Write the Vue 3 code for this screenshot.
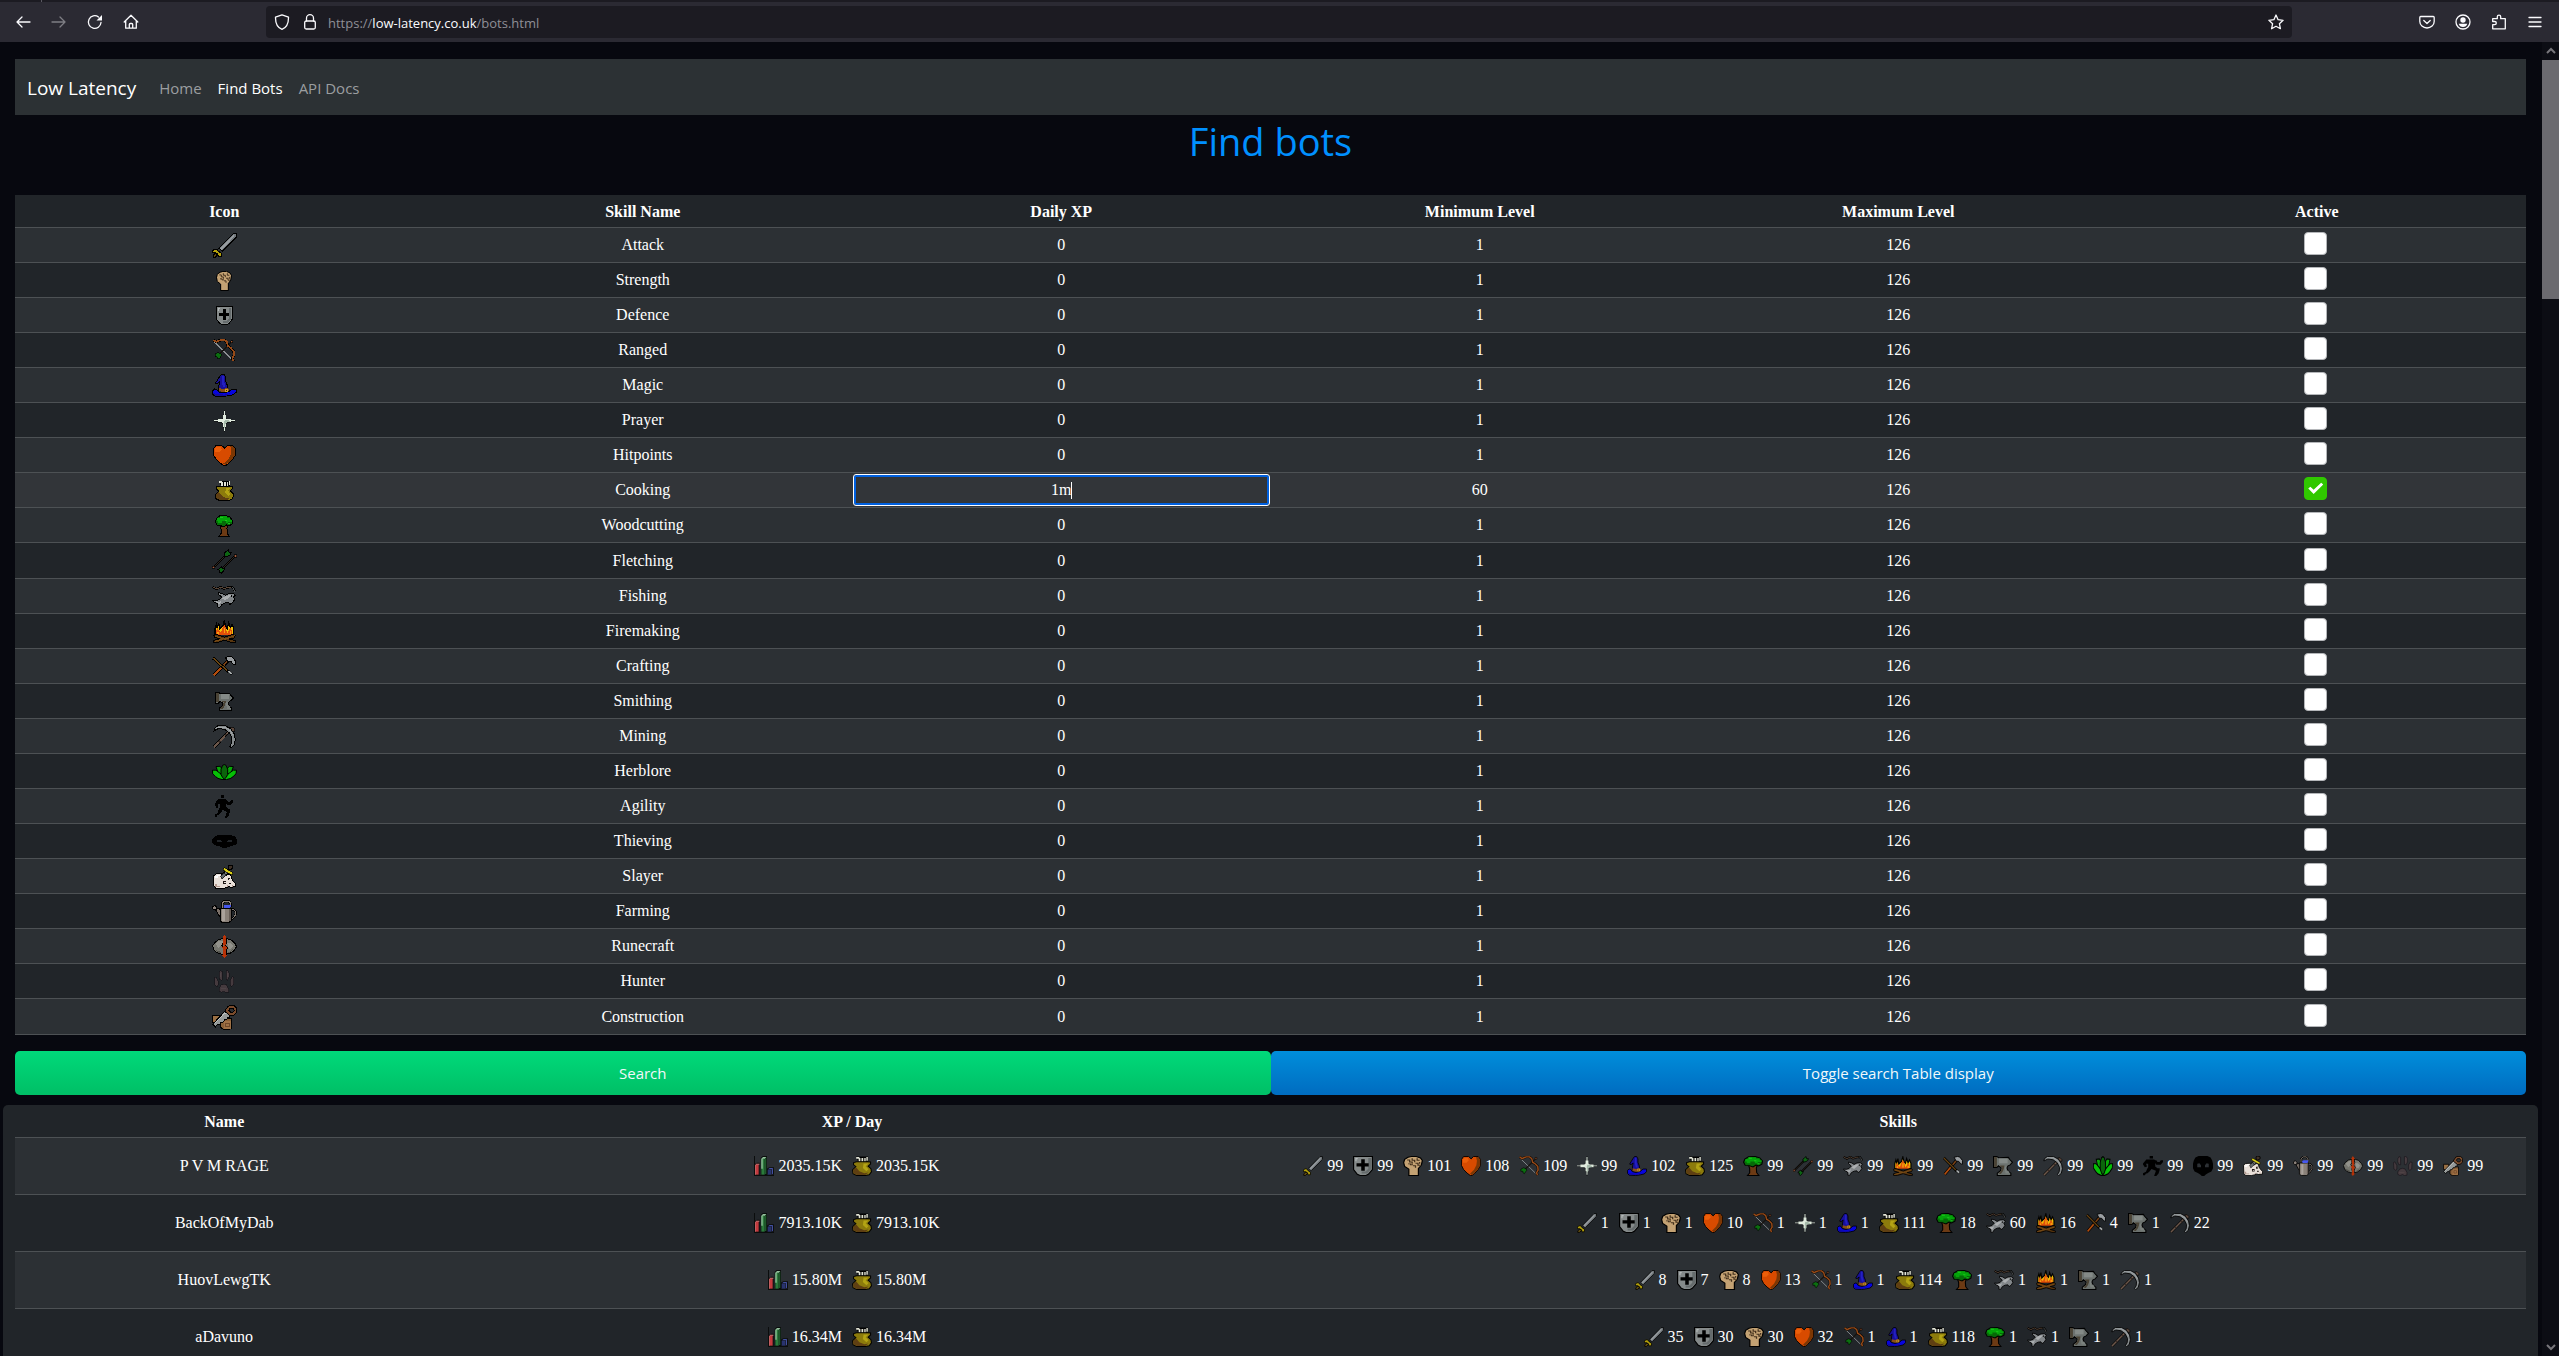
<script setup>
import { h, ref } from 'vue'

// Each icon: view box, then [path, fill, stroke, stroke width]; three units make one pixel.
const K = '#000'
const icons = {
  attack: { box: [96, 24, 75, 75], shapes: [
    ['M117,70 156,30 160,26 169,26 169,36 164,42 127,79z', '#72787c', K, 3],
    ['M120,72 160,31 163,34 124,76z', '#969b9f'],
    ['M98,78 102,72 110,72 114,78 124,85 124,94 115,95 113,87 106,83 98,83z', '#b3a00c', K, 3],
    ['M99,91 107,84 113,90 105,97 99,97z', '#5e4a10', K, 3]
  ] },
  strength: { box: [108, 138, 48, 61], shapes: [
    ['M122,178 112,170 109.500,158 112,148 120,142 128,139.500 140,139.500 150,144 154.500,152 152,166 145,176 145,197.500 122,197.500z', '#c4a273', K, 3],
    ['M118,150h6v6h6v6 M130,145v6h6v6 M142,145v6h6 M120,162h6v3h6 M138,160h6v6h6 M132,168h6v6 M148,156v6', 'none', '#43301c', 3]
  ] },
  defence: { box: [108, 246, 51, 57], shapes: [
    ['M109.500,247.500H157.500V285L147,298 141,301.500H126L119,298 109.500,285z', '#858a8a', K, 3],
    ['M147,252h7v32l-10,12h-14v-6h10l7,-8z', '#656b6c'],
    ['M117,267h31v9H117z M129,255h9v33h-9z', '#000'],
    ['M114,252h6v3h-6z M114,252h3v9h-3z', '#b4b9b9']
  ] },
  ranged: { box: [102, 345, 66, 68], shapes: [
    ['M106,353 160,407', 'none', '#8b8f92', 3],
    ['M158,354 122,390', 'none', '#17130f', 4],
    ['M104,348 112,354 120,350 126,348 137,348 144,354 147,366 156,372 164,381 165,393 160,402 163,410', 'none', K, 8],
    ['M104,348 112,354 120,350 126,348 137,348 144,354 147,366 156,372 164,381 165,393 160,402 163,410', 'none', '#964a18', 5],
    ['M155,350h6v6h-6z', '#a55a32', K, 2],
    ['M108,390 117,385 125,388 128,394 124,398 120,405 115,402 115,397 108,397z', '#0c6e10', K, 2]
  ] },
  magic: { box: [96, 450, 75, 69], shapes: [
    ['M119,458 124,452 132,451.500 137,460 137,472 142,484 144,496 116,498 117,484 119,474 111,480 106,478 111,470z', '#18109a', K, 3],
    ['M126,456h6v16l5,18h-8l-4,-18z', '#2420c4'],
    ['M97.500,500 104,495 110,496 116,504 130,507 146,503 156,495 169.500,495 169.500,504 160,512 146,515 128,517.500 104,516 98,510z', '#0704df', K, 3],
    ['M100,508 116,510 134,512 150,508 140,515H106z', '#120b9c'],
    ['M117,492 130,495 142,491 148,496 146,502 130,504 117,501z', '#8a4d18'],
    ['M135,494h9v9h-9z', '#c99a2a'],
    ['M138,497h3v3h-3z', '#3a2410']
  ] },
  prayer: { box: [102, 555, 63, 66], shapes: [
    ['M132,555h3v12h3v12h3v3h12v3h12v6h-12v3h-12v3h-3v12h-3v12h-3v-12h-3v-12h-3v-3h-12v-3h-12v-6h12v-3h12v-3h3v-12h3z', '#131518'],
    ['M132,558h3v12h3v10l4,3h12v3h11v3h-11v3h-12l-4,3v10h-3v12h-3v-12h-3v-10l-4,-3h-12v-3h-11v-3h11v-3h12l4,-3v-10h3z', '#dfeadd'],
    ['M135,584h6l8,4v3l-9,2 -4,4v12h-3v-20z', '#a4b8a9']
  ] },
  hitpoints: { box: [99, 661, 69, 62], shapes: [
    ['M134,670 142,662.500H158L166.500,672V690L158,703 146,715 137,721.500H131L120,714 108,703 100.500,690V672L108,662.500H125z', '#d84b00', K, 3],
    ['M151,664H158L165,673V690L157,702 145,714 136,720 130,716 144,704 152,690 154,676z', '#7c3704'],
    ['M106,670 112,667H122L126,674 118,682H106z', '#ec5f0a']
  ] },
  cooking: { box: [105, 768, 57, 63], shapes: [
    ['M117,769.500h34v18h-28z', '#000'],
    ['M117,771h9v3h3v12h-5v-9h-7z M132,774h5v12h-5z M140,774h4v12h-4z M146,771h4v12h-4z', '#e2e4d6'],
    ['M109.500,789 118,786H150L158,787V793L151,800 159,808 160.500,818 154,827 144,829.500H118L108,824 106.500,812 116,801 109.500,796z', '#8c7b0c', K, 3],
    ['M108,812 117,804 126,816 140,822 152,820 143,828H119L109,822z', '#5f3f12'],
    ['M138,792h14l-8,8 8,10 -6,6 -10,-10z', '#b3a414']
  ] },
  woodcutting: { box: [105, 870, 54, 66], shapes: [
    ['M120,899 144,899 141,910 142,925 148,934.500H117L123,926V912z', '#6c3a14', K, 3],
    ['M106.500,890 110,880 120,872 138,871.500 150,876 157.500,886 156,897 147,903 140,900 132,906 122,902 111,901z', '#066a08', K, 3],
    ['M112,880h8v-6h20v4h10v6h5v6h-10v4h-8v-6h-12v6h-10v-6h-5z', '#04a50a'],
    ['M120,876h9v3h-9z M135,884h6v3h-6z M144,894h6v3h-6z', '#1cc81c']
  ] },
  fletching: { box: [96, 972, 75, 75], shapes: [
    ['M101,1026 140,987 M166,993 127,1032', 'none', K, 7],
    ['M101,1026 140,987 M166,993 127,1032', 'none', '#4a3c30', 2],
    ['M97,1023h7v7h-7z M163,989h7v7h-7z', '#a65c3c', K, 2],
    ['M133,984 139,979 145,974 147,982 154,982 151,989 145,993 135,995z', '#0d6513', K, 3],
    ['M114,1034 124,1025 128,1030 135,1030 131,1038 124,1045 119,1042 120,1036z', '#0d6513', K, 3]
  ] },
  fishing: { box: [96, 1081, 72, 66], shapes: [
    ['M98,1084 110,1090 122,1084 132,1089 146,1085 156,1084 162,1090 165,1098', 'none', K, 7],
    ['M98,1084 110,1090 122,1084 132,1089 146,1085 152,1085', 'none', '#5b4637', 3],
    ['M155,1083 161,1090 165,1098', 'none', '#7d8284', 2],
    ['M97.500,1124 108,1125 118,1122 126,1114 116,1107 116,1101 128,1104 136,1109 146,1104 158,1103 166,1108 160,1114 164,1122 158,1131 150,1136 146,1130 136,1131 126,1136 120,1145 113,1144 114,1134 104,1131z', '#83878a', K, 3],
    ['M126,1118 138,1111 154,1107 148,1114 136,1124z M106,1127 118,1128 126,1124 118,1137z', '#adb0b2'],
    ['M153,1109h4v4h-4z', K]
  ] },
  firemaking: { box: [99, 1, 69, 68], shapes: [
    ['M105,44V28L109,14 112,25 116,10 119,28 123,24 128,20 133,4 137,20 142,26 146,10 151,24 156,14 161,26V44z', '#f0c008', K, 4],
    ['M109,44V32L113,25 118,34 123,38 128,24 133,15 138,26 141,40 146,34 151,24 156,34V44z', '#e2500a'],
    ['M112,36h5v7h-5z M131,26h5v14h-5z M149,34h5v8h-5z', '#f7a010'],
    ['M101,46 110,44 134,52 158,44 166,47 163,54 148,57 166,62V67H154L134,61 114,67H101V61L120,56 103,53z', '#59360f', K, 3],
    ['M104,48 134,58 164,48 M104,64 134,56', 'none', '#7a4d16', 3]
  ] },
  crafting: { box: [96, 108, 72, 63], shapes: [
    ['M102,166 148,118', 'none', K, 10],
    ['M102,166 124,143', 'none', '#b04c0e', 6],
    ['M123,144 148,118', 'none', '#7a4216', 5],
    ['M136,112 148,109.500 156,111 166,122 166,134 160,133 153,125 143,124z', '#9a9ea1', K, 3],
    ['M99,114 146,156', 'none', K, 9],
    ['M99,114 142,152', 'none', '#6b4612', 4],
    ['M143,152h7l6,6v5h-5l-8,-6z', '#a9adaf', K, 2]
  ] },
  smithing: { box: [105, 216, 56, 57], shapes: [
    ['M106.500,217.500H116L121,221 148,220 152,226 159.500,234 152,242 147,244 144,250 148,260 155,265V271.500H117V265L126,258 128,250 120,244 116,249 106.500,249z', '#6c726f', K, 3],
    ['M108,219h8v28h-8z M120,266l7,-7 4,-12h-6v-4h12v4l-4,12 -6,8z', '#4a4335'],
    ['M122,223h24v14h-24z', '#848a87'],
    ['M137,246h5v12h6l4,8h-12z', '#7b817e']
  ] },
  mining: { box: [99, 315, 69, 68], shapes: [
    ['M102,380 158,324', 'none', K, 9],
    ['M102,380 158,324', 'none', '#6b564a', 5],
    ['M116,366 120,362 M136,346 140,342', 'none', '#3a2e28', 5],
    ['M150,321h8l6,6v6h-8z', '#5c483d', K, 2],
    ['M102,332 104,324 114,317 136,317 152,326 163,342 166,358 162,374 153,382 149,378 155,368 156,354 148,338 134,328 116,325z', '#858a8c', K, 3],
    ['M112,321H134L150,331 159,346', 'none', '#b0b4b6', 2]
  ] },
  herblore: { box: [96, 430, 75, 49], shapes: [
    ['M108,438 120,437 126,444V462L114,456z M160,438 148,437 142,444V462L154,456z', '#08a808', K, 3],
    ['M97.500,449 108,449 118,457 126,464 133,470 141,464 149,457 160,449 169.500,449 168,460 160,468 152,474 140,477.500H126L114,474 106,468 98,460z', '#06c006', K, 3],
    ['M133,431.500 138,434 143,446 143,462 138,472 133,476 128,472 123,462 123,446 128,434z', '#0b640b', K, 3]
  ] },
  agility: { box: [105, 525, 54, 69], shapes: [
    ['M123,525h9v9h-9z M114,537h21l3,3h3l3,6h6l3,-6h6v6l-6,9h-12l-3,-6v12l6,6h6v6l-3,12 -6,9h-6l5,-18 -12,-6 -6,9 -6,6h-3l-3,6h-6v-6l9,-6 3,-9 3,-6v-12h-6l3,9 -6,3 -6,-12z', K]
  ] },
  thieving: { box: [96, 645, 75, 39], shapes: [
    ['M105,648 117,645H150L162,648 168,654 171,660V669L165,675 153,678 144,681 138,684H129L123,681 114,678 102,675 96,669V660L99,654z M112,660V667H126V663L120,659z M141,663V667H155V660L147,659z', K]
  ] },
  slayer: { box: [99, 735, 69, 72], shapes: [
    ['M126,762 144,748 148,756 130,776z', '#73797b', K, 3],
    ['M144,738 150,735 158,738 158,745 150,750 144,746z', '#3f3025', K, 3],
    ['M129,745 133,743 158,758 158,764 152,764 129,750z', '#d8cd16', K, 2],
    ['M100.500,768 108,762 124,761 130,768 140,766 144,762 152,764 154,774 160,784 166.500,790V800L154,802 146,800 138,803 128,805.500H108L102,798z', '#e9e0d9', K, 3],
    ['M122,768 133,758 138,766 126,778z', '#686e70', K, 2],
    ['M130,782h9v9h-9z M144,774h7v7h-7z M148,788h5v5h-5z', '#1c1512'],
    ['M133,785h4v3h-4z M147,776h3v3h-3z', '#e9e0d9'],
    ['M104,792h6v6h10v3h-14z M140,796h4v4h-4z M156,794h3v6h-3z', '#b49a8f'],
    ['M106,768h6v-3h8v3h-6v6h-8z', '#fff']
  ] },
  farming: { box: [96, 840, 75, 69], shapes: [
    ['M118,866 124,874 124,888 118,888 106,868z', '#7b7068', K, 3],
    ['M97.500,860 105,856 111,862 110,869 103,870 98,866z', '#8b817a', K, 3],
    ['M126,864V850L134,843H146L152,850V860', 'none', K, 7],
    ['M126,864V850L134,843H146L152,850V860', 'none', '#8c8279', 3],
    ['M152,870 160,868 167,874 167,884 158,896 151,898', 'none', K, 7],
    ['M152,870 160,868 167,874 167,884 158,896 151,898', 'none', '#7f766e', 3],
    ['M120,864H154V903L146,907.500H127L120,903z', '#8a8179', K, 3],
    ['M127,868h8v36h-8z', '#aaa29b'],
    ['M148,868h5v34h-5z', '#665c55'],
    ['M130,857 136,855H154L151,864H132z', '#4657ee']
  ] },
  runecraft: { box: [96, 945, 75, 69], shapes: [
    ['M97.500,978 104,968 116,959 126,956.500H142L154,960 166,972 169.500,980 162,992 150,1000 138,1003H126L110,998 102,990z', '#77776f', K, 3],
    ['M106,972 118,962H128V974L116,984z M142,970h10l8,8 -6,8h-8z', '#92928b'],
    ['M104,988 122,996V1000L112,997z M144,998 158,988 150,998z', '#55554f'],
    ['M129,956v12l-4,8 8,6 -4,8 4,14 M138,956l2,12 -4,8 6,8 -4,10v8', 'none', K, 3],
    ['M133,945 141,955H137V966L139,974 135,978 141,984 137,992V1005H141L133,1014 126,1005H130V990L126,982 131,976 129,966V955H126z', '#b83308']
  ] },
  hunter: { box: [102, 1054, 63, 68], shapes: [
    ['M118,1062 121,1056 126,1058V1084L120,1083 117,1074z M138,1056 143,1055 147,1062V1076L143,1084 138,1083z M103.500,1076 108,1074 114,1086V1098L111,1103 105,1098z M162,1076 157,1074 151,1084V1098L154,1103 161,1098z M124,1098 132,1096 140,1098 146,1110V1119L138,1120.500 132,1117 124,1120.500 117,1116V1108z', '#453a3e', '#17141a', 2],
    ['M121,1062v12 M143,1062v12 M122,1110h16', 'none', '#55484c', 2]
  ] },
  construction: { box: [96, 1155, 75, 75], shapes: [
    ['M98,1186H118V1206H98z', '#9a6f43', K, 3],
    ['M122,1206 138,1196H154V1226L146,1228.500H130L122,1222z', '#8a6038', K, 3],
    ['M132,1204h20v22h-20z', '#9f7146'],
    ['M137,1210h10v9h-10z', 'none', '#71492a', 3],
    ['M98,1213 136,1172 150,1186 149,1193 143,1193 140,1199 134,1199 130,1206 123,1207 120,1212 112,1214 106,1221z', '#969a99', K, 3],
    ['M104,1210 138,1177', 'none', '#c1c5c3', 3],
    ['M134,1174 144,1159 152,1156.500H162L169.500,1164V1178L160,1186 150,1187z M150,1165 146,1171 152,1177H159L163,1172 159,1165z', '#7a4b2c', K, 3]
  ] },
  overall: { box: [42, 48, 60, 60], shapes: [
    ['M42,48h3v57h57v3H42z M45,72l6,-4h8v38H45z M62,54l6,-6h13v58H62z M80,86l8,-4h14v22H80z', '#0b0d0d'],
    ['M46,74h10v30H46z', '#c33a3e'],
    ['M48,71h10v3H48z M46,74h2v30h-2z', '#e07a7a'],
    ['M64,56h10v48H64z', '#2b7a3b'],
    ['M64,56 69,51H79L75,56z M64,56h4v30h-4z', '#93c29d'],
    ['M75,56 79,52V102H75z', '#1f5a2b'],
    ['M83,89h10v15H83z', '#29336e'],
    ['M84,88 89,84H100L95,88z M95,89l4,-4v16l-4,3z', '#4350a0']
  ] }
}

const SkillIcon = ({ name }) => {
  const { box, shapes } = icons[name]
  return h('svg', {
    viewBox: box.join(' '),
    width: Math.round(box[2] / 3),
    height: Math.round(box[3] / 3),
    preserveAspectRatio: 'none',
    'aria-hidden': 'true'
  }, shapes.map(([d, fill, stroke, width]) =>
    h('path', { d, fill, stroke: stroke || 'none', 'stroke-width': width || 0 })))
}
SkillIcon.props = ['name']

const labels = ['Attack', 'Strength', 'Defence', 'Ranged', 'Magic', 'Prayer', 'Hitpoints', 'Cooking',
  'Woodcutting', 'Fletching', 'Fishing', 'Firemaking', 'Crafting', 'Smithing', 'Mining', 'Herblore',
  'Agility', 'Thieving', 'Slayer', 'Farming', 'Runecraft', 'Hunter', 'Construction']

const skills = ref(labels.map((label) => ({
  label,
  key: label.toLowerCase(),
  xp: label === 'Cooking' ? '1m' : '0',
  min: label === 'Cooking' ? '60' : '1',
  max: '126',
  active: label === 'Cooking'
})))

const current = ref('cooking')
const showTable = ref(true)

const parse = (text) => text.split(' ').map((part) => part.split(':'))

const bots = [
  { name: 'P V M RAGE', xp: '2035.15K', levels: parse('attack:99 defence:99 strength:101 hitpoints:108 ranged:109 prayer:99 magic:102 cooking:125 woodcutting:99 fletching:99 fishing:99 firemaking:99 crafting:99 smithing:99 mining:99 herblore:99 agility:99 thieving:99 slayer:99 farming:99 runecraft:99 hunter:99 construction:99') },
  { name: 'BackOfMyDab', xp: '7913.10K', levels: parse('attack:1 defence:1 strength:1 hitpoints:10 ranged:1 prayer:1 magic:1 cooking:111 woodcutting:18 fishing:60 firemaking:16 crafting:4 smithing:1 mining:22') },
  { name: 'HuovLewgTK', xp: '15.80M', levels: parse('attack:8 defence:7 strength:8 hitpoints:13 ranged:1 magic:1 cooking:114 woodcutting:1 fishing:1 firemaking:1 smithing:1 mining:1') },
  { name: 'aDavuno', xp: '16.34M', levels: parse('attack:35 defence:30 strength:30 hitpoints:32 ranged:1 magic:1 cooking:118 woodcutting:1 fishing:1 smithing:1 mining:1') }
]
</script>

<template>
  <div class="window">
    <div class="strip"><i></i></div>
    <header class="toolbar">
      <button class="tool" aria-label="Back"><svg viewBox="0 0 16 16"><path d="M15 8H2M7 3 2 8l5 5" /></svg></button>
      <button class="tool dim" aria-label="Forward"><svg viewBox="0 0 16 16"><path d="M1 8h13M9 3l5 5-5 5" /></svg></button>
      <button class="tool" aria-label="Reload"><svg viewBox="0 0 16 16"><path d="M14 8.500A6.300 6.300 0 1 1 11.500 3" /><path d="M15 1v5.500h-5.500z" class="solid" /></svg></button>
      <button class="tool" aria-label="Home"><svg viewBox="0 0 16 16"><path d="M1.200 8 8 1.300 14.800 8M2.700 7v7.200h10.600V7M6.300 14V10.500q0-1 1-1h1.400q1 0 1 1V14" /></svg></button>
      <div class="urlbar">
        <svg viewBox="0 0 16 16"><path d="M8 .9 14.500 3.200C14.600 9 12.500 13.500 8 15.300 3.500 13.500 1.400 9 1.500 3.200z" /></svg>
        <svg viewBox="0 0 16 16" class="lock"><path d="M4.500 7V4.200a3.500 3.500 0 0 1 7 0V7" /><rect x="2.700" y="7" width="10.600" height="8" rx="1.500" /></svg>
        <span class="url">https://<b>low-latency.co.uk</b>/bots.html</span>
        <svg viewBox="0 0 16 16"><path d="m8 1 2.100 4.700 5 .6-3.700 3.400 1 5L8 12.300l-4.400 2.400 1-5L.9 6.300l5-.6z" /></svg>
      </div>
      <button class="tool" aria-label="Pocket"><svg viewBox="0 0 16 16"><path d="M1.700 2.500h12.600q.9 0 .9 1V7.500a7.200 6.500 0 0 1-14.400 0V3.500q0-1 .9-1zM4.800 6.500 8 9.500l3.200-3" /></svg></button>
      <button class="tool" aria-label="Account"><svg viewBox="0 0 16 16"><circle cx="8" cy="8" r="7" /><circle cx="8" cy="6" r="2.700" class="solid" /><path d="M3.700 9.700h8.600q-1 3.300-4.300 3.300t-4.300-3.300z" class="solid" /></svg></button>
      <button class="tool" aria-label="Extensions"><svg viewBox="0 0 16 16"><path d="M1.700 14.800V10.700h2a1.500 1.500 0 0 0 0-3.200h-2V4.700h4.600V2.800a1.700 1.700 0 0 1 3.400 0V4.700h4.600v10.100z" /></svg></button>
      <button class="tool" aria-label="Menu"><svg viewBox="0 0 16 16"><path d="M2 3.500h12M2 8h12M2 12.500h12" /></svg></button>
    </header>

    <div class="viewport">
      <main class="page">
        <nav class="nav">
          <a class="brand" href="#">Low Latency</a>
          <a href="#">Home</a>
          <a href="#" class="here">Find Bots</a>
          <a href="#">API Docs</a>
        </nav>

        <h1>Find bots</h1>

        <table v-show="showTable" class="search">
          <thead>
            <tr><th>Icon</th><th>Skill Name</th><th>Daily XP</th><th>Minimum Level</th><th>Maximum Level</th><th>Active</th></tr>
          </thead>
          <tbody>
            <tr v-for="s in skills" :key="s.key" :class="{ hover: s.key === current, tall: s.key === 'fletching' || s.key === 'construction' }">
              <td class="icon"><SkillIcon :name="s.key" class="native" /></td>
              <td>{{ s.label }}</td>
              <td class="field" :class="{ focus: s.key === current }">
                <input v-model="s.xp" :aria-label="s.label + ' daily XP'" @focus="current = s.key">
                <span v-if="s.key === current" class="caret"></span>
              </td>
              <td class="field"><input v-model="s.min" :aria-label="s.label + ' minimum level'"></td>
              <td class="field"><input v-model="s.max" :aria-label="s.label + ' maximum level'"></td>
              <td class="check"><input v-model="s.active" type="checkbox" :aria-label="s.label + ' active'"></td>
            </tr>
          </tbody>
        </table>

        <div class="actions">
          <button class="go">Search</button>
          <button class="toggle" @click="showTable = !showTable">Toggle search Table display</button>
        </div>

        <section class="card">
          <table class="results">
            <thead>
              <tr><th class="name">Name</th><th class="xp">XP / Day</th><th>Skills</th></tr>
            </thead>
            <tbody>
              <tr v-for="b in bots" :key="b.name">
                <td>{{ b.name }}</td>
                <td>
                  <span class="stat"><SkillIcon name="overall" class="small" />{{ b.xp }}</span>
                  <span class="stat"><SkillIcon name="cooking" class="small" />{{ b.xp }}</span>
                </td>
                <td>
                  <span v-for="[key, level] in b.levels" :key="key" class="stat"><SkillIcon :name="key" class="small" />{{ level }}</span>
                </td>
              </tr>
            </tbody>
          </table>
        </section>
      </main>

      <div class="scrollbar" aria-hidden="true">
        <svg viewBox="0 0 10 10"><path d="M1 7l4-4 4 4" /></svg>
        <div class="track"><div class="thumb"></div></div>
        <svg viewBox="0 0 10 10"><path d="M1 3l4 4 4-4" /></svg>
      </div>
    </div>
  </div>
</template>

<style>
body {
  background: #07080f;
  overflow: hidden;
}
</style>

<style scoped>
* {
  box-sizing: border-box;
}

.window {
  display: flex;
  flex-direction: column;
  height: 100vh;
  overflow: hidden;
  color: #fff;
  font: 16px/24px "Liberation Serif", "Times New Roman", serif;
}

.strip {
  flex: none;
  height: 2px;
  padding-left: 41px;
  background: #1c1b22;
}

.strip i {
  display: block;
  width: 1px;
  height: 2px;
  background: #5b5a63;
}

.toolbar {
  flex: none;
  display: flex;
  align-items: center;
  gap: 4px;
  height: 40px;
  padding: 0 8px 0 7px;
  background: #2b2a33;
}

.tool {
  display: flex;
  align-items: center;
  justify-content: center;
  width: 32px;
  height: 32px;
  padding: 0;
  border: 0;
  background: none;
}

.tool.dim {
  opacity: 0.4;
}

.toolbar svg {
  flex: none;
  width: 16px;
  height: 16px;
  fill: none;
  stroke: #fbfbfe;
  stroke-width: 1.3;
  stroke-linejoin: round;
  stroke-linecap: round;
}

.toolbar svg .solid {
  fill: #fbfbfe;
  stroke: none;
}

.urlbar {
  flex: 1;
  display: flex;
  align-items: center;
  height: 32px;
  margin: 0 115px;
  padding: 0 8px;
  border-radius: 4px;
  background: #1c1b22;
}

.urlbar .lock {
  margin: 0 10px 0 12px;
}

.url {
  flex: 1;
  padding-top: 2px;
  color: #8f8f97;
  font: 13px/20px "Open Sans", sans-serif;
}

.url b {
  color: #fbfbfe;
  font-weight: 400;
}

.viewport {
  flex: 1;
  display: flex;
  min-height: 0;
}

.page {
  flex: 1;
  min-width: 0;
  padding: 17px 16px 0 15px;
}

.nav {
  display: flex;
  align-items: center;
  gap: 16px;
  height: 56px;
  padding: 2px 12px 0;
  background: #2c3134;
  font: 15px/24px "Open Sans", sans-serif;
}

.nav a {
  color: #9b9ea0;
  text-decoration: none;
}

.nav a.brand {
  margin-right: 7px;
  color: #fff;
  font-size: 19px;
}

.nav a.here {
  color: #fff;
}

h1 {
  margin: 0;
  padding: 2px 0 30px;
  color: #0090ff;
  font: 400 38px/48px "Open Sans", sans-serif;
  text-align: center;
}

table {
  width: 100%;
  border-spacing: 0;
  table-layout: fixed;
  text-align: center;
  background: #212529;
}

th {
  height: 33px;
  padding: 5px 4px 3px;
  border-bottom: 1px solid #4d5154;
}

td {
  padding: 0;
  border-bottom: 1px solid #4d5154;
}

tbody tr:nth-child(odd) {
  background: #2c3034;
}

.search tbody tr {
  height: 35px;
}

.search tbody tr.tall {
  height: 36px;
}

.search tbody tr.hover {
  background: #323539;
}

.icon {
  padding-top: 1px;
}

.native {
  display: block;
  margin: 0 auto;
  shape-rendering: crispEdges;
}

.field {
  position: relative;
}

.field input {
  display: block;
  width: 100%;
  height: 34px;
  padding: 0;
  border: 0;
  outline: 0;
  background: none;
  color: inherit;
  font: inherit;
  text-align: center;
}

.field.focus {
  padding: 1px;
}

.field.focus input {
  height: 32px;
  border: 1px solid #fff;
  border-radius: 3px;
  box-shadow: inset 0 0 0 2px #0060df;
}

.caret {
  position: absolute;
  top: 9px;
  left: 50%;
  width: 1px;
  height: 17px;
  margin-left: 10px;
  background: #fff;
}

.check {
  padding-right: 2px;
}

.check input {
  appearance: none;
  display: block;
  width: 23px;
  height: 23px;
  margin: 0 auto 3px;
  border: 1px solid #b4b6b9;
  border-radius: 4px;
  background: #fff;
}

.check input:checked {
  border-color: #30c800;
  background: #30c800;
}

.check input:checked::before {
  content: "";
  display: block;
  width: 15px;
  height: 13px;
  margin: 4px 3px;
  background: #fff;
  clip-path: polygon(0 50%, 14% 36%, 36% 60%, 86% 6%, 100% 20%, 36% 92%);
}

.actions {
  display: flex;
  margin-top: 16px;
}

.actions button {
  flex: 1;
  height: 44px;
  padding: 0;
  border: 0;
  border-radius: 5px;
  color: #f2f8fa;
  font: 15px/24px "Open Sans", sans-serif;
}

.go {
  background: linear-gradient(#00d97a, #00bf66);
}

.toggle {
  background: linear-gradient(#008edb, #006cc0);
}

.card {
  margin: 10px -12px 0;
  padding: 0 12px 40px;
  border-radius: 5px;
  background: #212529;
}

.results tbody tr {
  height: 57px;
}

.results .name {
  width: 16.6667%;
}

.results .xp {
  width: 33.3333%;
}

.results td {
  font-size: 0;
}

.results td:first-child {
  font-size: 16px;
}

.stat {
  display: inline-flex;
  align-items: center;
  gap: 4px;
  margin-right: 10px;
  font-size: 16px;
  vertical-align: middle;
}

.small {
  width: 20px;
  height: 20px;
}

.scrollbar {
  flex: none;
  display: flex;
  flex-direction: column;
  align-items: center;
  width: 17px;
  background: #0c0d14;
}

.scrollbar svg {
  width: 10px;
  height: 18px;
  fill: none;
  stroke: #77767b;
  stroke-width: 2;
}

.track {
  flex: 1;
  width: 100%;
}

.thumb {
  height: 18.7%;
  background: #6b6a6f;
}
</style>
